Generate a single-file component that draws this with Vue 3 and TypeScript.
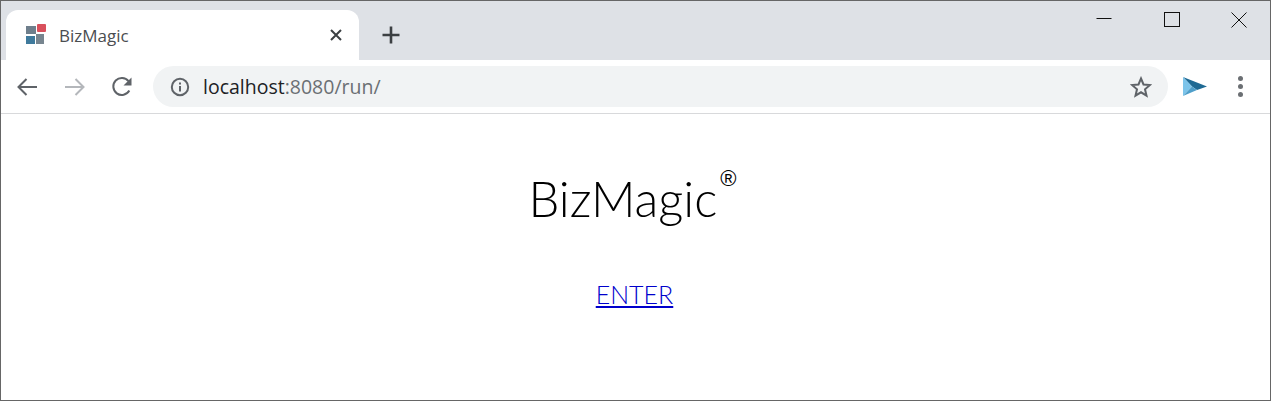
<template>
  <div class="window">
    <div class="tabstrip">
      <div class="tab">
        <svg class="favicon" width="20" height="20" viewBox="0 0 20 20">
          <rect x="0" y="2" width="10" height="8" fill="#6f7f8c" />
          <rect x="11" y="0" width="9" height="8" rx="1" fill="#d9505c" />
          <rect x="0" y="12" width="9" height="8" fill="#3f7a9c" />
          <rect x="10" y="10" width="8" height="10" fill="#77858f" />
        </svg>
        <span class="tab-title">{{ title }}</span>
        <svg class="tab-close" width="14" height="14" viewBox="0 0 14 14">
          <path d="M2 2 12 12M12 2 2 12" stroke="#3c4043" stroke-width="2" fill="none" />
        </svg>
      </div>
      <svg class="new-tab" width="20" height="20" viewBox="0 0 20 20">
        <path d="M10 1.500V18.500M1.500 10H18.500" stroke="#3c4043" stroke-width="2.600" fill="none" />
      </svg>
      <div class="win-controls">
        <svg width="16" height="16" viewBox="0 0 16 16">
          <path d="M0.500 6.500H15.500" stroke="#111" fill="none" />
        </svg>
        <svg width="16" height="16" viewBox="0 0 16 16">
          <rect x="0.500" y="0.500" width="15" height="14" stroke="#111" fill="none" />
        </svg>
        <svg class="win-close" width="16" height="16" viewBox="0 0 16 16">
          <path d="M0.500 0.500 15.500 15.500M15.500 0.500 0.500 15.500" stroke="#111" fill="none" />
        </svg>
      </div>
    </div>

    <div class="toolbar">
      <svg class="nav back" width="22" height="20" viewBox="0 0 22 20">
        <path d="M21 10H2.500M10.500 2 2.500 10 10.500 18" stroke="#5f6368" stroke-width="2" fill="none" />
      </svg>
      <svg class="nav" width="22" height="20" viewBox="0 0 22 20">
        <path d="M1 10H19.500M11.500 2 19.500 10 11.500 18" stroke="#b4b7bb" stroke-width="2" fill="none" />
      </svg>
      <svg class="nav" width="22" height="22" viewBox="0 0 22 22">
        <path d="M18.300 14.500A8.500 8.500 0 1 1 17.500 5.200" stroke="#5f6368" stroke-width="2" fill="none" />
        <path d="M20.500 1.500V9.500H12.500Z" fill="#5f6368" />
      </svg>
      <div class="omnibox">
        <svg width="20" height="20" viewBox="0 0 20 20">
          <circle cx="10" cy="10" r="8.200" stroke="#5f6368" stroke-width="2" fill="none" />
          <rect x="9" y="9" width="2" height="5.500" fill="#5f6368" />
          <rect x="9" y="5.500" width="2" height="2" fill="#5f6368" />
        </svg>
        <span class="url"><span class="host">localhost</span>:8080/run/</span>
        <svg class="star" width="22" height="22" viewBox="0 0 22 22">
          <path d="M11 2.500 13.500 8.500 20 9 15 13.300 16.500 19.700 11 16.300 5.500 19.700 7 13.300 2 9 8.500 8.500Z" stroke="#5f6368" stroke-width="2" fill="none" />
        </svg>
      </div>
      <svg class="ext" width="24" height="19" viewBox="0 0 24 19">
        <path d="M0 0 24 9.500 14 13 9 9.500Z" fill="#1f6a94" />
        <path d="M0 0 9 9.500 0 19Z" fill="#7cc4ea" />
        <path d="M0 19 9 9.500 14 13Z" fill="#4f9fca" />
      </svg>
      <div class="menu"><i></i><i></i><i></i></div>
    </div>

    <div class="page">
      <h1 class="brand">{{ title }}<sup class="reg">®</sup></h1>
      <a class="enter" href="#">ENTER</a>
    </div>
  </div>
</template>

<script setup lang="ts">
const title = 'BizMagic'
</script>

<style>
html, body {
  margin: 0;
  background: #fff;
}
</style>

<style scoped>
.window {
  box-sizing: border-box;
  width: 1271px;
  height: 401px;
  border: 1px solid #666;
  display: flex;
  flex-direction: column;
  overflow: hidden;
  font-family: "Open Sans", sans-serif;
}

.tabstrip {
  height: 59px;
  flex: none;
  background: #dee1e6;
  display: flex;
  align-items: flex-end;
}

.tab {
  box-sizing: border-box;
  width: 353px;
  height: 50px;
  margin-left: 5px;
  padding: 0 16px 0 20px;
  background: #fff;
  border-radius: 12px 12px 0 0;
  display: flex;
  align-items: center;
}

.tab-title {
  margin-left: 13px;
  font-size: 17px;
  color: #4a4d50;
  flex: 1;
}

.favicon {
  margin-top: -2px;
}

.new-tab {
  margin: 0 0 15px 22px;
}

.win-controls {
  margin-left: auto;
  align-self: flex-start;
  margin-top: 11px;
  margin-right: 23px;
  display: flex;
  gap: 52px;
}

.win-close {
  margin-left: -1px;
}

.toolbar {
  height: 54px;
  flex: none;
  box-sizing: border-box;
  border-bottom: 1px solid #d8d9db;
  display: flex;
  align-items: center;
  padding-left: 15px;
  background: #fff;
}

.nav {
  margin-right: 25px;
}

.back {
  margin-right: 26px;
}

.omnibox {
  box-sizing: border-box;
  width: 1015px;
  height: 41px;
  margin-left: -5px;
  padding: 0 16px 0 17px;
  border-radius: 21px;
  background: #f1f3f4;
  display: flex;
  align-items: center;
}

.url {
  margin-left: 13px;
  font-size: 19.500px;
  color: #6b6f73;
  flex: 1;
}

.host {
  color: #202124;
}

.ext {
  margin-left: 15px;
}

.menu {
  margin-left: 31px;
  display: flex;
  flex-direction: column;
  gap: 3px;
}

.menu i {
  width: 5px;
  height: 5px;
  border-radius: 50%;
  background: #6b6f73;
}

.page {
  flex: 1;
  display: flex;
  flex-direction: column;
  align-items: center;
  padding-right: 2px;
  font-family: Lato, sans-serif;
}

.brand {
  margin: 54px 0 0 -4px;
  font-size: 49px;
  line-height: 60px;
  font-weight: 300;
  color: #000;
}

.reg {
  font-family: "Liberation Sans", sans-serif;
  font-size: 22px;
  font-weight: 400;
  line-height: 0;
  vertical-align: 31px;
  margin-left: 3px;
}

.enter {
  margin-top: 50px;
  font-size: 25px;
  line-height: 32px;
  font-weight: 300;
  color: #0000cc;
}
</style>
